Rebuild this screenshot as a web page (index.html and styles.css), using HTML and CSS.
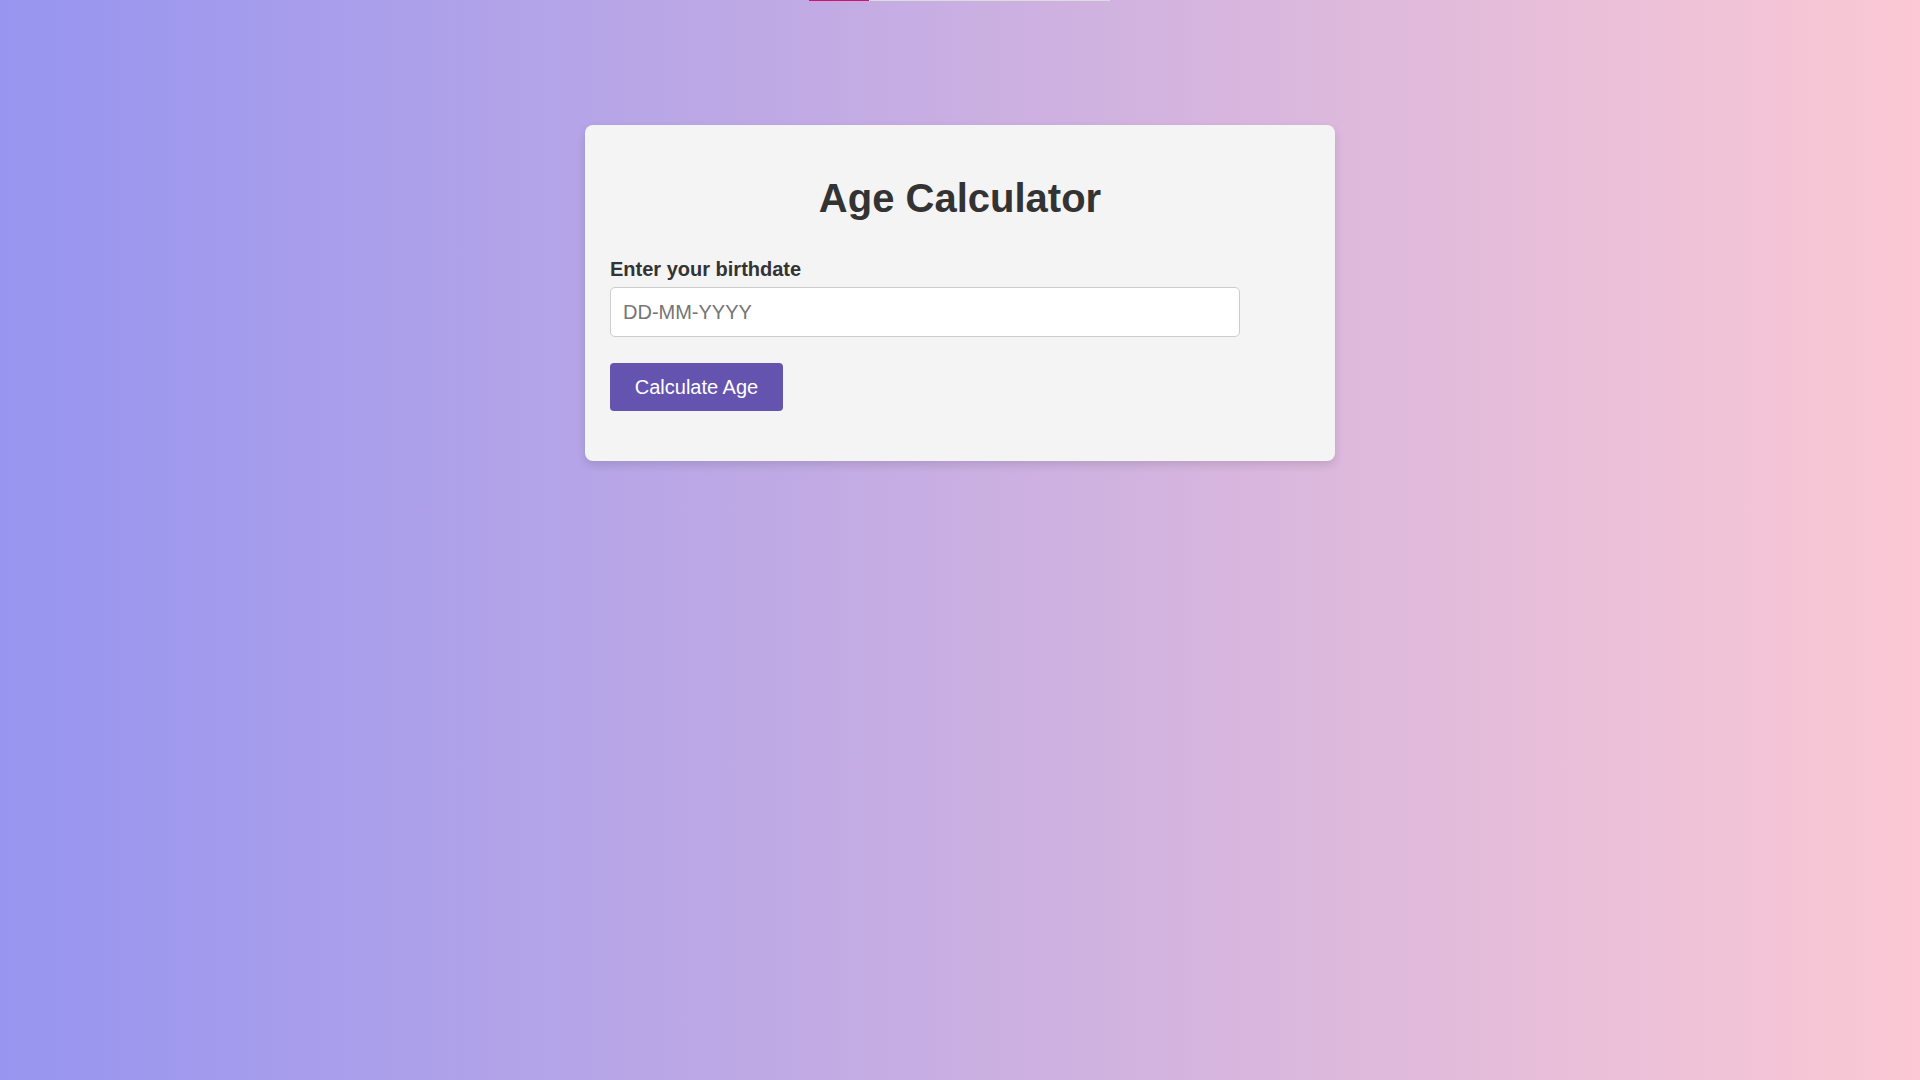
FILE: index.html
```html
<!DOCTYPE html>
<html lang="en">
<head>
<meta charset="UTF-8">
<title>Age Calculator</title>
<link rel="stylesheet" href="styles.css">
</head>
<body>
<div class="progress"><div class="progress-fill" style="width: 20%"></div></div>
<main class="page">
  <section class="card">
    <h1 class="title">Age Calculator</h1>
    <label class="label" for="birthdate">Enter your birthdate</label>
    <input class="input" id="birthdate" type="text" placeholder="DD-MM-YYYY">
    <button class="btn" type="button">Calculate Age</button>
  </section>
</main>
</body>
</html>
```

FILE: styles.css
```css
* { box-sizing: border-box; }
html, body { height: 100%; }
body {
  margin: 0;
  font-family: "Liberation Sans", Arial, sans-serif;
  background: linear-gradient(to right, #9795f0, #fbc8d4);
  color: #333;
  position: relative;
}
.progress {
  position: absolute;
  top: 0;
  left: 809px;
  width: 301px;
  height: 1px;
  background: #dcdcdc;
}
.progress-fill {
  height: 100%;
  background: #d1136f;
}
.page {
  display: flex;
  justify-content: center;
  padding-top: 125px;
}
.card {
  width: 750px;
  background: #f4f4f4;
  border-radius: 8px;
  padding: 50px 25px 25px;
  box-shadow: 0 4px 10px rgba(0, 0, 0, 0.12);
}
.title {
  margin: 0 0 37px;
  text-align: center;
  font-size: 40px;
  line-height: 46px;
  font-weight: bold;
  color: #333;
}
.label {
  display: block;
  font-size: 20px;
  font-weight: bold;
  line-height: 23px;
  margin-bottom: 6px;
  color: #333;
}
.input {
  display: block;
  width: 90%;
  height: 50px;
  padding: 0 12px;
  border: 1px solid #ccc;
  border-radius: 5px;
  background: #fff;
  font-family: "Liberation Sans", Arial, sans-serif;
  font-size: 20px;
  color: #333;
  outline: none;
  margin: 0 0 26px;
}
.input::placeholder { color: #757575; }
.btn {
  display: block;
  width: 173px;
  height: 48px;
  padding: 0;
  border: none;
  border-radius: 4px;
  background: #6554af;
  color: #fff;
  font-family: "Liberation Sans", Arial, sans-serif;
  font-size: 20px;
  cursor: pointer;
  margin-bottom: 25px;
}
```
